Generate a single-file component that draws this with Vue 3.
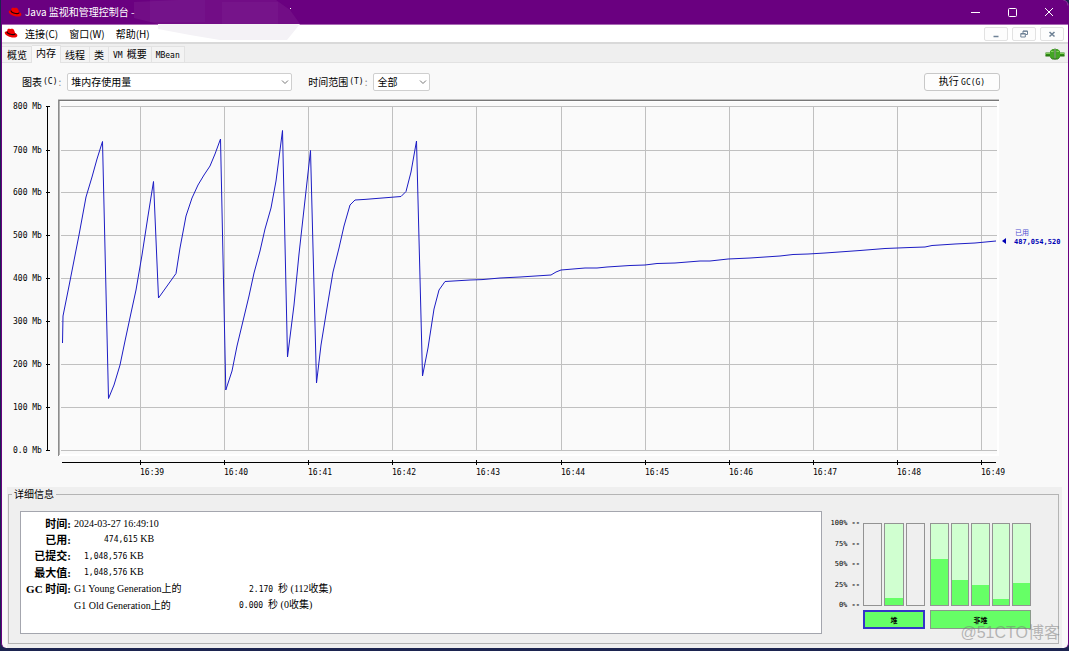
<script setup>
import { ref } from 'vue'

const menus = ['连接(C)', '窗口(W)', '帮助(H)']
const tabs = [
  { text: '概览' },
  { text: '内存' },
  { text: '线程' },
  { text: '类' },
  { latin: 'VM', text: '概要' },
  { latin: 'MBean' },
]
const activeTab = ref(1)

const yTicks = [
  ['800 Mb', 106], ['700 Mb', 150], ['600 Mb', 192], ['500 Mb', 235], ['400 Mb', 278],
  ['300 Mb', 321], ['200 Mb', 364], ['100 Mb', 407], ['0.0 Mb', 450],
]
const xTicks = [
  ['16:39', 140], ['16:40', 224], ['16:41', 308], ['16:42', 392], ['16:43', 476], ['16:44', 561],
  ['16:45', 645], ['16:46', 729], ['16:47', 813], ['16:48', 897], ['16:49', 981],
]
const series = [
  [62.5, 343], [63, 316], [69, 286], [79, 235], [86, 197], [92, 177], [97, 159], [102.5, 141.5],
  [108.5, 398.5], [114, 385], [120, 365], [125, 341], [131, 313], [136, 290], [142, 255], [148, 216],
  [153.5, 181.5], [158.5, 298], [176, 273.5], [180, 248], [186, 216], [192, 198], [198, 185],
  [204, 175], [210, 166], [215, 154], [220.5, 139], [225.8, 390], [232, 371], [237, 346], [243, 321],
  [249, 296], [254, 273], [260, 251], [265, 229], [271, 208], [276, 181], [279, 158], [282.5, 130.5],
  [287.5, 357], [294, 305], [299, 254], [305, 200], [310.5, 150.5], [316.5, 383], [321, 345],
  [327, 308], [333, 272], [339, 248], [344, 226], [350, 205], [355, 200], [365, 199.4], [401, 196.5],
  [406, 191.5], [411, 172], [416.5, 141], [422.5, 376], [428, 348], [434, 309], [439, 290],
  [445, 281.5], [470, 280], [482, 279.6], [500, 278], [520, 277], [551, 275], [556, 272], [561, 270],
  [585, 268], [597, 268], [607, 267], [630, 265.5], [645, 265], [657, 263.5], [675, 263], [700, 261],
  [710, 261], [728, 259], [750, 258], [780, 256], [793, 254.5], [808, 254], [825, 253], [860, 250.5],
  [885, 248.5], [910, 247.5], [925, 247], [932, 245.5], [955, 244], [975, 243], [996, 241],
].map((p) => p.join(',')).join(' ')

const scale = ['100%', '75%', '50%', '25%', '0%']
const pools = [
  { name: '堆', selected: true, kind: 'heap', bars: [null, 9, null] },
  { name: '非堆', selected: false, kind: 'nonheap', bars: [57, 31, 25, 8, 27] },
]
</script>

<template>
  <div class="window">
    <header class="titlebar">
      <svg class="hat" viewBox="0 0 14 11" aria-hidden="true">
        <path d="M3.6 1.2C4.4.3 5.4.9 6.3.9c1-.1 1.8-.5 2.8.1 1.2.7 1.5 2.4 1.9 3.9 1.5.7 2.7 1.8 2.3 3-.5 1.9-4 2.1-7 1.2C3.5 8.3.8 6.3.7 4.7.7 3.6 1.9 3.4 3 3.5z" fill="#f00000" />
        <path d="M3 3.6c0 1.3 2.3 2.5 4.7 2.9 1.8.3 3.4.1 3.4-1" fill="none" stroke="#200008" stroke-width="1.2" />
      </svg>
      <h1>Java 监视和管理控制台 -</h1>
      <div class="caption-buttons">
        <button aria-label="最小化"><svg viewBox="0 0 10 10"><path d="M1 5.500h9" /></svg></button>
        <button aria-label="最大化"><svg viewBox="0 0 10 10"><rect x="1.5" y="1.5" width="8" height="8" rx="1" /></svg></button>
        <button aria-label="关闭"><svg viewBox="0 0 10 10"><path d="M1 1l8 8M9 1l-8 8" /></svg></button>
      </div>
    </header>

    <nav class="menubar">
      <svg class="hat" viewBox="0 0 14 11" aria-hidden="true">
        <path d="M3.6 1.2C4.4.3 5.4.9 6.3.9c1-.1 1.8-.5 2.8.1 1.2.7 1.5 2.4 1.9 3.9 1.5.7 2.7 1.8 2.3 3-.5 1.9-4 2.1-7 1.2C3.5 8.3.8 6.3.7 4.7.7 3.6 1.9 3.4 3 3.5z" fill="#f00000" />
        <path d="M3 3.6c0 1.3 2.3 2.5 4.7 2.9 1.8.3 3.4.1 3.4-1" fill="none" stroke="#200008" stroke-width="1.2" />
      </svg>
      <button v-for="m in menus" :key="m" class="menu">{{ m }}</button>
      <div class="frame-buttons">
        <button aria-label="图标化"><svg viewBox="0 0 8 8"><path d="M1.5 6.5h5" stroke-width="1.5" /></svg></button>
        <button aria-label="还原"><svg viewBox="0 0 8 8"><path d="M3 3V1h4.500v3.500H5.500M.8 3.500h4.500v3.500H.8zM.8 4h4.500M3 1.300h4.500" /></svg></button>
        <button aria-label="关闭框架"><svg viewBox="0 0 8 8"><path d="M1.500 2l5 4.500M6.500 2l-5 4.500" stroke-width="1.6" /></svg></button>
      </div>
    </nav>

    <svg class="smudge" viewBox="2 0 300 42" aria-hidden="true">
      <path d="M134 2L178 0H276L290 10L300 24H158L134 18z" fill="#80208f" opacity=".4" />
      <path d="M150 0h55v22h-55z" fill="#8a3aa0" opacity=".14" />
      <path d="M222 2h56v22h-56z" fill="#8a3aa0" opacity=".18" />
      <path d="M158 24H300L287 40H220L190 35L158 29z" fill="#f4f2f6" />
      <path d="M290 8h1v1h-1z" fill="#fff" />
    </svg>

    <div class="tabs" role="tablist">
      <button
        v-for="(t, i) in tabs"
        :key="i"
        role="tab"
        :aria-selected="i === activeTab"
        :class="['tab', { active: i === activeTab }]"
        @click="activeTab = i"
      ><span v-if="t.latin" class="latin">{{ t.latin }}</span><span v-if="t.text">{{ t.text }}</span></button>
      <svg class="plug" viewBox="0 0 20 12" role="img" aria-label="已连接">
        <path d="M.5 4.500h5v3.500h-5zM14.500 4.500h5v3.500h-5z" fill="#2f8a15" />
        <path d="M5 3L7.500 1h1.800v10H7.500L5 9z" fill="#43a524" />
        <path d="M10.700 1h1.800L15 3v6l-2.500 2h-1.800z" fill="#43a524" />
        <path d="M10 .5v11" stroke="#1b5408" />
        <path d="M5.500 9.500L7.500 11h5l2-1.500M.5 8h4.500M15 8h4.500" fill="none" stroke="#256f0d" />
        <path d="M1 5.500h4M6 3.500h2.500M11.500 3.500H14M15 5.500h4" stroke="#86cf60" />
      </svg>
    </div>

    <main class="panel">
      <div class="controls">
        <label for="chart">图表<span class="latin">(C)</span><i>:</i></label>
        <span class="combo wide">
          <select id="chart"><option>堆内存使用量</option></select>
          <svg viewBox="0 0 8 6" aria-hidden="true"><path d="M1 1.500l3 3 3-3" /></svg>
        </span>
        <label for="range" class="range-label">时间范围<span class="latin">(T)</span><i>:</i></label>
        <span class="combo">
          <select id="range"><option>全部</option></select>
          <svg viewBox="0 0 8 6" aria-hidden="true"><path d="M1 1.500l3 3 3-3" /></svg>
        </span>
        <button class="gc">执行 <span class="latin">GC(G)</span></button>
      </div>

      <svg class="chart" viewBox="2 98 1066 389" role="img" aria-label="堆内存使用量">
        <path d="M58 100H999V456H58z" fill="#fff" />
        <path d="M60 102H997V454H60z" fill="#fafafa" />
        <path d="M58 99.500H999" stroke="#c4c4c4" />
        <path d="M58 100.500H999" stroke="#777" />
        <path d="M58.500 100V456" stroke="#8c8c8c" />
        <path d="M59.500 101V455" stroke="#b4b4b4" />
        <g stroke="#c0c0c0">
          <path v-for="t in yTicks" :key="t[0]" :d="`M61 ${t[1] + 0.5}H997`" />
          <path v-for="t in xTicks" :key="t[0]" :d="`M${t[1] + 0.5} 106V450`" />
        </g>
        <g stroke="#000">
          <path d="M47.500 106V451M62 462.500H996" />
          <path v-for="t in yTicks" :key="t[0]" :d="`M46 ${t[1] + 0.5}H50`" />
          <path v-for="t in xTicks" :key="t[0]" :d="`M${t[1] + 0.5} 460V465`" />
        </g>
        <text v-for="t in yTicks" :key="t[0]" x="13" :y="t[1] + 3">{{ t[0] }}</text>
        <text v-for="t in xTicks" :key="t[0]" :x="t[1]" y="475">{{ t[0] }}</text>
        <polyline :points="series" fill="none" stroke="#1c1cc4" />
        <path d="M1002 241L1006 238V244z" fill="#0000b4" />
        <text class="used-name" x="1015" y="235">已用</text>
        <text class="used-value" x="1014" y="244">487,054,520</text>
      </svg>
    </main>

    <div class="lower">
      <fieldset class="details">
        <legend>详细信息</legend>
        <div class="details-row">
          <div class="textbox">
            <table>
              <tbody>
                <tr><th>时间:</th><td colspan="2">2024-03-27 16:49:10</td></tr>
                <tr><th>已用:</th><td colspan="2"><span class="num used">474,615</span> KB</td></tr>
                <tr><th>已提交:</th><td colspan="2"><span class="num size">1,048,576</span> KB</td></tr>
                <tr><th>最大值:</th><td colspan="2"><span class="num size">1,048,576</span> KB</td></tr>
                <tr><th>GC 时间:</th><td class="gc-name">G1 Young Generation上的</td><td class="young"><span class="num">2.170</span>&nbsp; 秒 (112收集)</td></tr>
                <tr><th></th><td class="gc-name">G1 Old Generation上的</td><td><span class="num">0.000</span>&nbsp; 秒 (0收集)</td></tr>
              </tbody>
            </table>
          </div>
          <div class="usage">
            <div class="scale">
              <span v-for="s in scale" :key="s">{{ s }} <b>--</b></span>
            </div>
            <div v-for="p in pools" :key="p.name" :class="['pool', p.kind]">
              <div class="bars">
                <div v-for="(b, i) in p.bars" :key="i" :class="['bar', { filled: b !== null }]">
                  <div v-if="b !== null" class="level" :style="{ height: b + '%' }"></div>
                </div>
              </div>
              <button :class="{ selected: p.selected }">{{ p.name }}</button>
            </div>
          </div>
        </div>
      </fieldset>
    </div>
    <div class="watermark">@51CTO博客</div>
  </div>
</template>

<style>
html, body { background: #1c2450; }
</style>

<style scoped>
* { box-sizing: border-box; }

.window {
  position: relative;
  margin-left: 1px;
  border: solid #6a0080;
  border-width: 0 1px;
  border-radius: 0 6px 5px 5px;
  overflow: hidden;
  background: #f9f9f9;
  color: #000;
  font: 10px/14px "Noto Sans CJK SC", sans-serif;
}
button, select {
  margin: 0;
  padding: 0;
  border: 0;
  background: none;
  color: inherit;
  font: inherit;
}
svg { display: block; }
.latin { font: 8px/14px "DejaVu Sans Mono", monospace; }

.titlebar {
  display: flex;
  align-items: center;
  height: 25px;
  padding-left: 6px;
  background: #6a0080;
  border-bottom: 1px solid #a868b4;
  color: #fff;
}
.titlebar h1 { position: relative; z-index: 1; margin: 0 0 0 3px; font-size: 10px; font-weight: 400; line-height: 14px; }
.hat { width: 14px; height: 11px; }
.caption-buttons { display: flex; margin-left: auto; padding-right: 1px; }
.caption-buttons button { display: grid; place-items: center; width: 37px; height: 24px; }
.caption-buttons svg { width: 10px; height: 10px; fill: none; stroke: #fff; }

.menubar {
  display: flex;
  align-items: center;
  height: 19px;
  padding: 0 4px 0 2px;
  background: #fff;
  border-bottom: 2px solid #d9d9d9;
}
.menu { position: relative; z-index: 1; margin: 0 4px 0 7px; line-height: 14px; }
.frame-buttons { display: flex; gap: 4px; margin-left: auto; }
.frame-buttons button {
  display: grid;
  place-items: center;
  width: 24px;
  height: 14px;
  border: 1px solid #e2e2e2;
  border-radius: 2px;
  background: #fdfdfd;
}
.frame-buttons svg { width: 8px; height: 8px; fill: none; stroke: #6f8296; }

.smudge { position: absolute; left: 0; top: 0; width: 300px; height: 42px; pointer-events: none; }

.tabs {
  display: flex;
  align-items: flex-end;
  height: 19px;
  padding-right: 3px;
  background: #efefef;
  border-bottom: 1px solid #e2e2e2;
}
.tab {
  height: 16px;
  padding: 0 4px;
  border: 1px solid #e2e2e2;
  border-width: 1px 1px 0 0;
  background: #f3f3f3;
  white-space: nowrap;
}
.tab span + span { margin-left: 4px; }
.tab.active {
  height: 18px;
  margin-bottom: -1px;
  padding-bottom: 4px;
  background: #f9f9f9;
}
.tab:first-child { padding-left: 5px; }
.plug { width: 20px; height: 12px; margin: 0 0 2px auto; }

.controls {
  display: flex;
  align-items: center;
  height: 35px;
  padding: 2px 68px 0 20px;
}
.controls label { display: flex; white-space: nowrap; }
.controls label .latin { margin-left: 1px; }
.controls label i { margin-left: 1px; color: #888; font-style: normal; }
.range-label { margin-left: 16px; }
.combo { position: relative; width: 57px; margin-left: 6px; }
.combo.wide { width: 225px; }
.combo select {
  display: block;
  appearance: none;
  width: 100%;
  height: 18px;
  padding-left: 3px;
  border: 1px solid #cfcfcf;
  border-radius: 2px;
  background: #fff;
  line-height: 16px;
}
.combo svg {
  position: absolute;
  right: 3px;
  top: 6px;
  width: 8px;
  height: 6px;
  fill: none;
  stroke: #777;
  pointer-events: none;
}
.gc {
  width: 76px;
  height: 18px;
  margin-left: auto;
  border: 1px solid #c8c8c8;
  border-radius: 3px;
  background: #fdfdfd;
}

.chart { width: 100%; height: auto; }
.chart text { font: 8px "DejaVu Sans Mono", monospace; white-space: pre; }
.chart .used-name { fill: #5050d0; font: 7px "Noto Sans CJK SC", sans-serif; }
.chart .used-value { fill: #0000b4; font: bold 7px "DejaVu Sans Mono", monospace; }

.lower { margin: 0 6px 0 5px; padding-bottom: 4px; background: #efefef; }
.details {
  min-width: 0;
  margin: 0 3px 0 1px;
  padding: 0 27px 9px 11px;
  border: 1px solid #b4b4b4;
}
.details legend { margin-left: -8px; padding: 0 2px; line-height: 14px; }
.details-row { display: flex; padding-top: 10px; }
.textbox {
  flex: 1;
  min-width: 0;
  height: 123px;
  padding: 4px 2px;
  border: 1px solid #a4a6ae;
  background: #fff;
}
table {
  height: 98px;
  border-collapse: collapse;
  font: 10px/14px "Liberation Serif", "Noto Sans CJK SC", serif;
}
th, td { padding: 0; text-align: left; white-space: nowrap; vertical-align: middle; }
th { width: 48px; font-size: 11px; text-align: right; }
td { padding-left: 3px; }
.gc-name { width: 165px; }
.young { padding-left: 13px; }
.num { font: 8px/14px "DejaVu Sans Mono", monospace; }
.used { padding-left: 30px; }
.size { padding-left: 10px; }

.usage { display: flex; margin-left: 8px; }
.scale {
  display: flex;
  flex-direction: column;
  justify-content: space-between;
  height: 90px;
  margin: 8px 3px 0 0;
  font: 7px/8px "DejaVu Sans Mono", monospace;
  text-align: right;
}
.pool { display: flex; flex-direction: column; width: 62px; margin-top: 12px; }
.nonheap { width: 101px; margin-left: 5px; }
.bars { display: flex; gap: 2px; height: 83px; }
.bar {
  display: flex;
  flex: 1;
  align-items: flex-end;
  border: 1px solid #939393;
}
.bar.filled { background: #d0ffd0; }
.level { width: 100%; background: #66ff66; }
.pool button {
  height: 19px;
  margin-top: 4px;
  border: 1px solid #8a9a8a;
  background: #66ff66;
  font-size: 7px;
  font-weight: 700;
  line-height: 14px;
}
.pool button.selected { border: 2px solid #3434c8; }

.watermark {
  position: absolute;
  right: 8px;
  bottom: 5px;
  color: rgba(120, 120, 120, 0.5);
  font: 16px/20px "Liberation Sans", "Noto Sans CJK SC", sans-serif;
}
</style>
